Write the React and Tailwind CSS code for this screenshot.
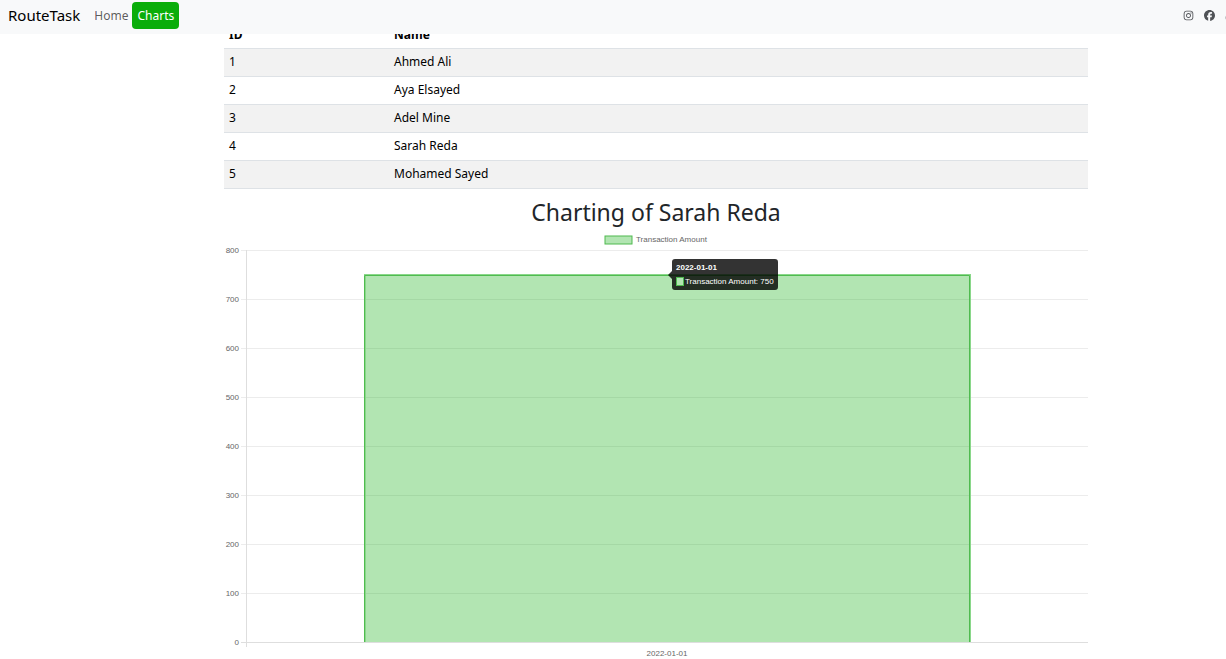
import { FaInstagram, FaFacebook, FaTiktok } from "react-icons/fa6";

const users = ["Ahmed Ali", "Aya Elsayed", "Adel Mine", "Sarah Reda", "Mohamed Sayed"];
const ticks = [
  { value: 800, y: 23 },
  { value: 700, y: 72 },
  { value: 600, y: 121 },
  { value: 500, y: 170 },
  { value: 400, y: 219 },
  { value: 300, y: 268 },
  { value: 200, y: 317 },
  { value: 100, y: 366 },
  { value: 0, y: 415 },
];

function Navbar() {
  return (
    <nav className="sticky top-0 z-10 flex h-[34px] items-center overflow-hidden bg-[#f8f9fa] pb-[3px] pl-2">
      <a href="#" className="mr-2.5 text-[15px] text-black">RouteTask</a>
      <ul className="flex items-center">
        <li>
          <a href="#home" className="block px-1 text-xs text-[#000000a6]">Home</a>
        </li>
        <li>
          <a href="#charts" className="flex h-[27px] items-center rounded bg-[#0aad0a] px-[5px] text-xs text-white">Charts</a>
        </li>
      </ul>
      <div className="-mr-2.5 ml-auto flex shrink-0 items-center gap-2.5 text-[11px] text-[#4f5256]">
        <a href="#instagram" aria-label="Instagram"><FaInstagram /></a>
        <a href="#facebook" aria-label="Facebook"><FaFacebook /></a>
        <a href="#tiktok" aria-label="TikTok"><FaTiktok /></a>
      </div>
    </nav>
  );
}

function UserTable() {
  return (
    <table className="w-full table-fixed border-collapse text-left text-xs text-black">
      <thead>
        <tr className="h-7 border-b border-[#dee2e6]">
          <th className="w-[165px] px-[5px] pt-0.5 font-bold">ID</th>
          <th className="px-[5px] pt-0.5 font-bold">Name</th>
        </tr>
      </thead>
      <tbody>
        {users.map((name, i) => (
          <tr key={name} className="h-7 border-b border-[#dee2e6] odd:bg-[#f2f2f2]">
            <td className="px-[5px]">{i + 1}</td>
            <td className="px-[5px]">{name}</td>
          </tr>
        ))}
      </tbody>
    </table>
  );
}

function BarChart() {
  return (
    <svg viewBox="0 0 864 432" role="img" aria-label="Transaction Amount by date" className="block w-full font-['Liberation_Sans',sans-serif] text-[8px]">
      <rect x="381" y="9" width="27" height="8" fill="#b2e5b2" stroke="#4fb94f" />
      <text x="412" y="15" fill="#666">Transaction Amount</text>
      {ticks.map(({ value, y }) => (
        <g key={value}>
          <path d={`M17 ${y + 0.5}H864`} stroke={value === 0 ? "#dedede" : "#ececec"} />
          <text x="15" y={y + 3} textAnchor="end" fill="#666">{value}</text>
        </g>
      ))}
      <path d="M22.5 23V420" stroke="#dedede" />
      <rect x="140" y="47" width="606" height="368" fill="#00aa00" fillOpacity="0.3" />
      <path d="M140.5 415V48.5H745.5V415" fill="none" stroke="#4fbb4f" />
      <path d="M140 47.5H747M141.5 49V415M746.5 48V415" fill="none" stroke="#8ad78a" />
      <text x="443" y="429" textAnchor="middle" fill="#666">2022-01-01</text>
      <path d="M451 32H551Q554 32 554 35V60Q554 63 551 63H451Q448 63 448 60V52L444 48L448 44V35Q448 32 451 32Z" fill="#000" fillOpacity="0.8" />
      <text x="452" y="43" fill="#fff" fontWeight="700">2022-01-01</text>
      <rect x="452.5" y="50.5" width="7" height="8" fill="#b2e5b2" stroke="#4fb94f" />
      <text x="461" y="57" fill="#fff">Transaction Amount: 750</text>
    </svg>
  );
}

export default function App() {
  return (
    <div className="overflow-x-clip bg-white font-['Noto_Sans',sans-serif]">
      <Navbar />
      <main className="-mt-3.5 pl-56 pr-[138px]">
        <UserTable />
        <h1 className="flex h-[38px] items-center justify-center pt-2 text-[23px] leading-7 text-[#212529]">Charting of Sarah Reda</h1>
        <BarChart />
      </main>
    </div>
  );
}
